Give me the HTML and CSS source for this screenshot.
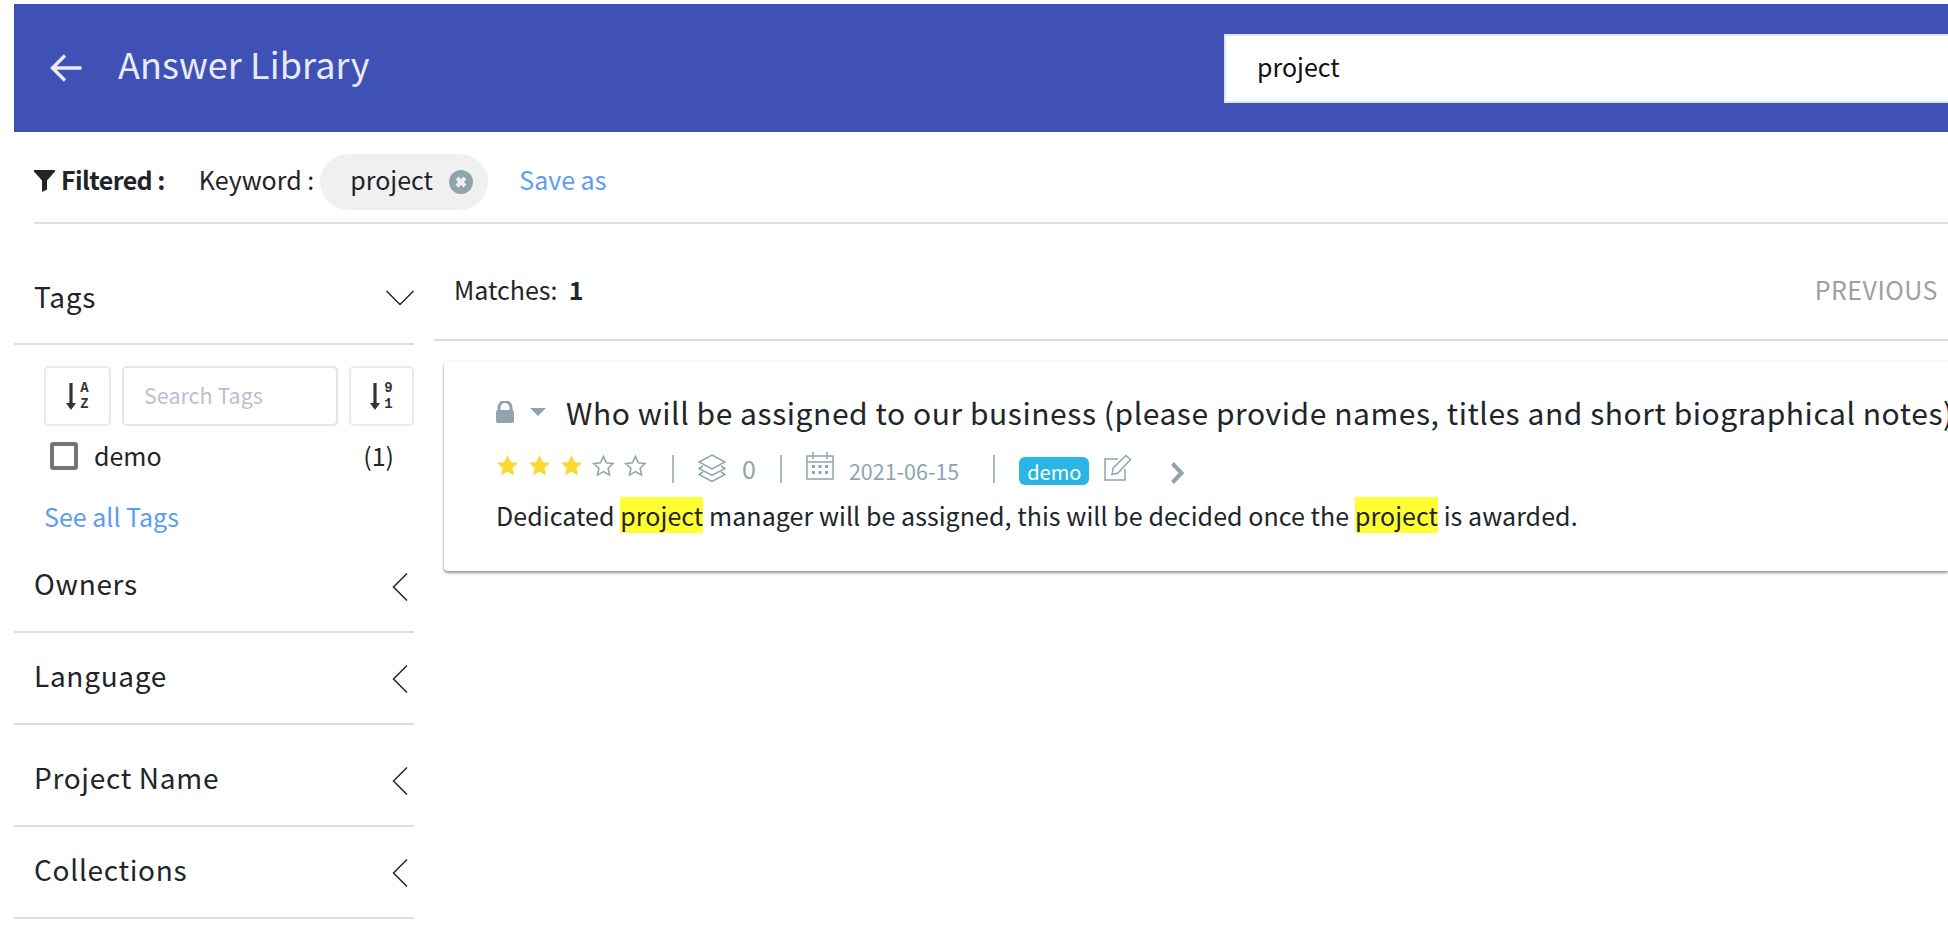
FILE: index.html
```html
<!DOCTYPE html>
<html lang="en">
<head>
<meta charset="utf-8">
<title>Answer Library</title>
<link rel="stylesheet" href="styles.css">
</head>
<body>
<div class="page">
  <header class="topbar">
    <svg class="back" viewBox="0 0 32 32"><path d="M31.500 16H3M15 3.500 2.500 16 15 28.500" fill="none" stroke="currentColor" stroke-width="3.400"/></svg>
    <h1 class="title">Answer Library</h1>
    <div class="search">project</div>
  </header>
  <div class="content">
    <div class="filters">
      <svg class="funnel" viewBox="0 0 21 22"><path d="M0 0h21v1.500L13 10.500V19.500L8 22V10.500L0 1.500z" fill="#212529"/></svg>
      <b class="filtered">Filtered :</b>
      <span class="kw">Keyword :</span>
      <span class="chip">project
        <svg class="chip-x" viewBox="0 0 24 24"><circle cx="12" cy="12" r="12" fill="#90a4ae"/><path d="M8 8l8 8M16 8l-8 8" stroke="#f0f0f0" stroke-width="4"/></svg>
      </span>
      <a class="saveas">Save as</a>
    </div>
    <div class="columns">
      <aside class="side">
        <div class="sec sec-tags"><span>Tags</span>
          <svg class="chev-d" viewBox="0 0 28 16"><path d="M.5 1 14 14.500 27.500 1" fill="none" stroke="#212529" stroke-width="1.500"/></svg>
        </div>
        <div class="tagbody">
          <div class="tagtools">
            <div class="sortbtn sb-a">
              <svg class="sortarrow" viewBox="0 0 10 27"><path d="M5 0v22" stroke="#333" stroke-width="3.200" fill="none"/><path d="M0 20h10L5 27z" fill="#333"/></svg>
              <span class="sortlabel"><i>A</i><i>Z</i></span>
            </div>
            <div class="tagsearch">Search Tags</div>
            <div class="sortbtn sb-n">
              <svg class="sortarrow" viewBox="0 0 10 27"><path d="M5 0v22" stroke="#333" stroke-width="3.200" fill="none"/><path d="M0 20h10L5 27z" fill="#333"/></svg>
              <span class="sortlabel"><i>9</i><i>1</i></span>
            </div>
          </div>
          <div class="tagrow"><span class="check"></span><span class="tagname">demo</span><span class="tagcount">(1)</span></div>
          <a class="seeall">See all Tags</a>
        </div>
        <div class="sec sec-a"><span>Owners</span><svg class="chev-l" viewBox="0 0 16 28"><path d="M15 .5 1.500 14 15 27.500" fill="none" stroke="#212529" stroke-width="1.500"/></svg></div>
        <div class="sec sec-a"><span>Language</span><svg class="chev-l" viewBox="0 0 16 28"><path d="M15 .5 1.500 14 15 27.500" fill="none" stroke="#212529" stroke-width="1.500"/></svg></div>
        <div class="sec sec-b"><span>Project Name</span><svg class="chev-l" viewBox="0 0 16 28"><path d="M15 .5 1.500 14 15 27.500" fill="none" stroke="#212529" stroke-width="1.500"/></svg></div>
        <div class="sec sec-a"><span>Collections</span><svg class="chev-l" viewBox="0 0 16 28"><path d="M15 .5 1.500 14 15 27.500" fill="none" stroke="#212529" stroke-width="1.500"/></svg></div>
      </aside>
      <main class="results">
        <div class="matches"><span>Matches:&nbsp; <b>1</b></span><span class="prev">PREVIOUS</span></div>
        <article class="card">
          <div class="qrow">
            <svg class="lock" viewBox="0 0 18 22"><path d="M3 10V6.500a6 6 0 0 1 12 0V10" fill="none" stroke="#90a4ae" stroke-width="3"/><rect y="9" width="18" height="13" rx="2" fill="#90a4ae"/></svg>
            <svg class="caret" viewBox="0 0 16 8"><path d="M0 0h16L8 8z" fill="#90a4ae"/></svg>
            <span class="question">Who will be assigned to our business (please provide names, titles and short biographical notes)</span>
          </div>
          <div class="meta">
            <span class="stars">
              <svg class="star" viewBox="0 0 24 24"><path d="M12 1l3.300 7.400 7.700.8-5.800 5.300 1.700 8L12 18.500 5.100 22.500l1.700-8L1 9.200l7.700-.8z" fill="#fdd835"/></svg>
              <svg class="star" viewBox="0 0 24 24"><path d="M12 1l3.300 7.400 7.700.8-5.800 5.300 1.700 8L12 18.500 5.100 22.500l1.700-8L1 9.200l7.700-.8z" fill="#fdd835"/></svg>
              <svg class="star" viewBox="0 0 24 24"><path d="M12 1l3.300 7.400 7.700.8-5.800 5.300 1.700 8L12 18.500 5.100 22.500l1.700-8L1 9.200l7.700-.8z" fill="#fdd835"/></svg>
              <svg class="star" viewBox="0 0 24 24"><path d="M12 2.500l3 6.700 7 .8-5.200 4.800 1.500 7.200-6.300-3.700-6.300 3.700 1.500-7.200L1.800 10l7-.8z" fill="none" stroke="#90a4ae" stroke-width="1.600"/></svg>
              <svg class="star" viewBox="0 0 24 24"><path d="M12 2.500l3 6.700 7 .8-5.200 4.800 1.500 7.200-6.300-3.700-6.300 3.700 1.500-7.200L1.800 10l7-.8z" fill="none" stroke="#90a4ae" stroke-width="1.600"/></svg>
            </span>
            <span class="sep sep1"></span>
            <svg class="layers" viewBox="0 0 28 28"><path d="M14 1 27 8l-13 7L1 8zM5 12 1 14.500l13 7 13-7-4-2.500M5 18 1 20.500l13 7 13-7-4-2.500" fill="none" stroke="#90a4ae" stroke-width="1.500"/></svg>
            <span class="count">0</span>
            <span class="sep sep2"></span>
            <svg class="cal" viewBox="0 0 28 28"><path d="M1 4h26v23H1zM1 10h26M7 0v7M21 0v7" fill="none" stroke="#90a4ae" stroke-width="1.500"/><path d="M6 13h3v3H6zM12.500 13h3v3h-3zM19 13h3v3h-3zM6 19h3v3H6zM12.500 19h3v3h-3zM19 19h3v3h-3z" fill="#90a4ae"/></svg>
            <span class="date">2021-06-15</span>
            <span class="sep sep3"></span>
            <span class="badge">demo</span>
            <svg class="edit" viewBox="0 0 28 28"><path d="M21 15v11H1V5h13" fill="none" stroke="#90a4ae" stroke-width="1.500"/><path d="M9 14 22 1.500 26.500 5.500 14 19l-6 1.500z" fill="none" stroke="#90a4ae" stroke-width="1.500"/></svg>
            <svg class="chev-r" viewBox="0 0 14 22"><path d="M2.500 1.500 11.500 11l-9 9.500" fill="none" stroke="#90a4ae" stroke-width="4"/></svg>
          </div>
          <p class="answer">Dedicated <mark>project</mark> manager will be assigned, this will be decided once the <mark>project</mark> is awarded.</p>
        </article>
      </main>
    </div>
  </div>
</div>
</body>
</html>
```
FILE: styles.css
```css
* { box-sizing: border-box; }
html, body { margin: 0; padding: 0; background: #fff; }
body {
  width: 1948px;
  height: 926px;
  overflow: hidden;
  font-family: "Noto Sans CJK SC", "Noto Sans", sans-serif;
  color: #212529;
}
.page { padding: 4px 0 0 14px; width: 1948px; }

.topbar {
  height: 128px;
  background: #3f51b5;
  display: flex;
  align-items: center;
  padding-left: 36px;
  color: #e8eaf6;
}
.back { width: 32px; height: 32px; flex: none; }
.title {
  margin: 0 0 10px 36px;
  font-size: 36px;
  font-weight: 400;
  color: #e8eaf6;
  letter-spacing: 0.1px;
}
.search {
  margin-left: auto;
  width: 724px;
  height: 69px;
  margin-top: 1px;
  background: #fff;
  border: 2px solid #dde8ee;
  border-right: 0;
  padding: 0 0 6px 31px;
  display: flex;
  align-items: center;
  font-size: 25px;
  color: #111;
}

.filters {
  margin-left: 20px;
  height: 92px;
  padding-top: 10px;
  border-bottom: 2px solid #dedede;
  display: flex;
  align-items: center;
  font-size: 25px;
}
.funnel { width: 21px; height: 22px; flex: none; margin-bottom: 2px; }
.filtered { margin: 0 0 6px 6px; font-weight: 700; letter-spacing: -0.6px; }
.kw { margin: 0 0 6px 34px; }
.chip {
  margin-left: 6px;
  height: 56px;
  width: 168px;
  border-radius: 28px;
  background: #f0f0f0;
  display: flex;
  align-items: center;
  padding: 0 0 6px 30px;
}
.chip-x { width: 24px; height: 24px; margin-left: 16px; flex: none; margin-top: 5px; }
.saveas { margin: 0 0 6px 31px; color: #5c9ded; }

.columns { display: flex; }
.side { width: 400px; flex: none; }
.sec {
  display: flex;
  justify-content: space-between;
  align-items: center;
  border-bottom: 2px solid #dedede;
  font-size: 28px;
  padding-left: 20px;
  padding-right: 6px;
  letter-spacing: 0.7px;
}
.sec > span { margin-bottom: 6px; }
.sec-tags { height: 121px; padding-right: 0; align-items: flex-start; line-height: 40px; padding-top: 52px; }
.chev-d { width: 28px; height: 16px; margin-top: 14px; }
.chev-l { width: 16px; height: 28px; margin-top: 2px; }
.sec-a { height: 92px; }
.sec-b { height: 102px; padding-top: 10px; }

.tagbody { height: 196px; padding: 21px 0 0 30px; }
.tagtools { display: flex; height: 60px; gap: 11px; }
.sortbtn {
  width: 67px;
  flex: none;
  border: 2px solid #e6ecee;
  border-radius: 5px;
  display: flex;
  align-items: center;
  justify-content: center;
  gap: 4px;
}
.sb-n { width: 65px; }
.sortarrow { width: 10px; height: 27px; flex: none; }
.sortlabel { display: flex; flex-direction: column; }
.sortlabel i {
  font-style: normal;
  font-family: "Liberation Mono", monospace;
  font-weight: 700;
  font-size: 14px;
  line-height: 16px;
  color: #333;
}
.tagsearch {
  width: 216px;
  border: 2px solid #dee7ea;
  border-radius: 5px;
  padding: 0 0 4px 20px;
  display: flex;
  align-items: center;
  font-size: 21.5px;
  color: #b9bfd0;
}
.tagrow { display: flex; align-items: center; height: 32px; margin-top: 14px; padding-left: 6px; font-size: 25px; }
.check { width: 28px; height: 28px; border: 4px solid #757575; border-radius: 3px; flex: none; }
.tagname { margin: 0 0 2px 16px; }
.tagcount { margin: 0 20px 2px auto; }
.seeall { display: block; margin-top: 26px; font-size: 25px; color: #5c9ded; line-height: 36px; }

.results { flex: none; margin-left: 20px; width: 1514px; }
.matches {
  height: 117px;
  border-bottom: 2px solid #dedede;
  display: flex;
  justify-content: space-between;
  align-items: center;
  padding: 14px 10px 0 20px;
  font-size: 25px;
}
.prev { color: #9e9e9e; font-size: 25px; letter-spacing: 0.5px; }
.card {
  margin: 20px 0 0 10px;
  height: 210px;
  border-radius: 4px 0 0 4px;
  box-shadow: 0 2px 3px rgba(0,0,0,.4), 0 0 2px rgba(0,0,0,.1);
  padding: 31px 0 0 52px;
  background: #fff;
  overflow: hidden;
}
.qrow { display: flex; align-items: center; white-space: nowrap; height: 40px; }
.lock { width: 18px; height: 22px; flex: none; }
.caret { width: 16px; height: 8px; margin-left: 16px; flex: none; }
.question { margin-left: 20px; font-size: 30px; letter-spacing: 0.56px; }
.meta { display: flex; align-items: center; height: 36px; margin-top: 15px; color: #90a4ae; font-size: 21.5px; }
.stars { display: flex; gap: 9px; }
.star { width: 23px; height: 23px; flex: none; }
.sep { width: 2px; height: 28px; background: #a9bac2; flex: none; margin-top: 7px; }
.sep1 { margin-left: 25px; }
.layers { width: 28px; height: 28px; margin: 6px 0 0 24px; flex: none; }
.count { margin: 6px 0 0 16px; font-size: 25px; }
.sep2 { margin-left: 24px; }
.cal { width: 28px; height: 28px; margin: 2px 0 0 24px; flex: none; }
.date { margin: 10px 0 0 15px; }
.sep3 { margin-left: 34px; }
.badge {
  margin: 12px 0 0 24px;
  background: #29b6e6;
  color: #fff;
  border-radius: 6px;
  height: 28px;
  width: 70px;
  display: flex;
  align-items: center;
  justify-content: center;
  font-size: 20px;
}
.edit { width: 28px; height: 28px; margin: 6px 0 0 15px; flex: none; }
.chev-r { width: 14px; height: 22px; margin: 16px 0 0 38px; flex: none; }
.answer { margin: 14px 0 0; font-size: 25px; line-height: 36px; letter-spacing: 0.06px; white-space: nowrap; }
mark { background: #ffff33; color: #212529; }
```
